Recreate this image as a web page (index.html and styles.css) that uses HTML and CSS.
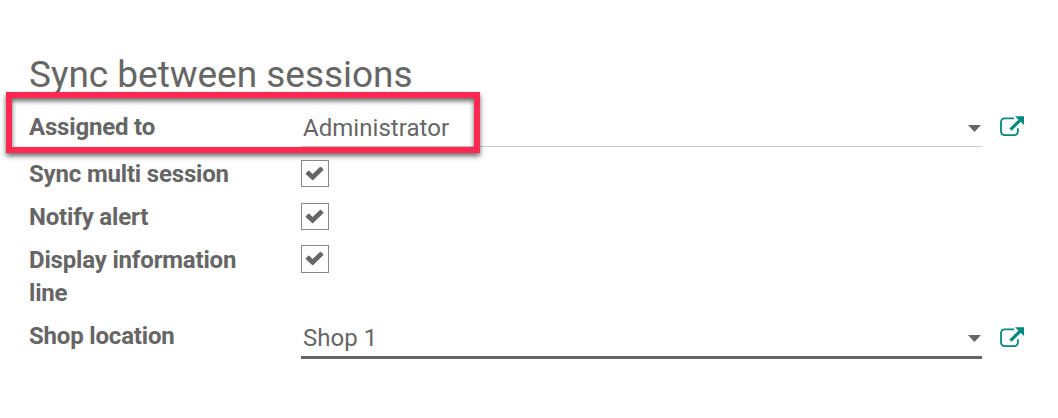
FILE: index.html
```html
<!DOCTYPE html>
<html lang="en">
<head>
<meta charset="utf-8">
<title>Sync between sessions</title>
<link rel="stylesheet" href="styles.css">
</head>
<body>
<svg class="symbols" aria-hidden="true">
  <symbol id="check" viewBox="0 0 20 16"><path d="M.9 8.2 3.2 5.8a.8.8 0 0 1 1.1 0L7.6 9 14.9 1.9a.8.8 0 0 1 1.1 0l2.2 2.2a.8.8 0 0 1 0 1.1L8.2 14.9a.8.8 0 0 1-1.1 0L.9 9.3a.8.8 0 0 1 0-1.1z" fill="currentColor"/></symbol>
  <symbol id="external" viewBox="0 0 24 21"><path d="M14 2.4H4.6A3.6 3.6 0 0 0 1 6v9.6a3.6 3.6 0 0 0 3.6 3.6h9.7a3.6 3.6 0 0 0 3.6-3.6v-3.4" fill="none" stroke="currentColor" stroke-width="1.8"/><path d="M10.5 13.7 20 4.4" fill="none" stroke="currentColor" stroke-width="3.2"/><path d="M15 .3h9v8.6z" fill="currentColor"/></symbol>
</svg>
<main class="settings">
  <h2 class="title">Sync between sessions</h2>
  <div class="row row-assigned">
    <label class="label">Assigned to</label>
    <div class="select"><span class="value">Administrator</span><i class="caret"></i></div>
    <svg class="external"><use href="#external"/></svg>
    <div class="highlight"></div>
  </div>
  <div class="row row-check">
    <label class="label">Sync multi session</label>
    <span class="checkbox"><svg class="check"><use href="#check"/></svg></span>
  </div>
  <div class="row row-check">
    <label class="label">Notify alert</label>
    <span class="checkbox"><svg class="check"><use href="#check"/></svg></span>
  </div>
  <div class="row row-check row-tall">
    <label class="label">Display information line</label>
    <span class="checkbox checkbox-tall"><svg class="check"><use href="#check"/></svg></span>
  </div>
  <div class="row">
    <label class="label">Shop location</label>
    <div class="select select-focus"><span class="value">Shop 1</span><i class="caret"></i></div>
    <svg class="external"><use href="#external"/></svg>
  </div>
</main>
</body>
</html>
```
FILE: styles.css
```css
* { box-sizing: border-box; }
body { margin: 0; background: #fff; color: #666; font: 24px/33px Roboto, sans-serif; }
.symbols { display: none; }
.settings { padding: 53px 0 0 29px; height: 418px; overflow: hidden; }
.title { margin: 0; height: 58px; font-size: 37px; line-height: 44px; font-weight: 400; letter-spacing: -0.03px; white-space: nowrap; }
.row { display: grid; grid-template-columns: 272px 681px 24px; align-items: start; position: relative; }
.row-assigned { height: 47px; }
.row-check { height: 43px; }
.row-tall { height: 76px; }
.label { font-weight: 700; letter-spacing: -0.18px; padding-right: 32px; }
.select { display: flex; justify-content: space-between; height: 36px; padding: 1px 1px 0 2px; border-bottom: 1px solid #ccc; }
.select-focus { height: 39px; padding-top: 2px; border-bottom: 3px solid #666; }
.value { letter-spacing: 0.04px; }
.caret { width: 13px; height: 7px; margin-top: 13px; background: #666; clip-path: polygon(0 0, 100% 0, 50% 100%); }
.external { width: 24px; height: 21px; margin: 5px 0 0 18px; color: #00897f; }
.row:last-child .external { margin-top: 7px; }
.checkbox { width: 28px; height: 27px; margin-top: 2px; border: 1px solid #888; display: flex; }
.checkbox-tall { height: 28px; margin-top: 1px; }
.check { width: 20px; height: 16px; margin: 4px 0 0 3px; color: #666; }
.highlight { position: absolute; left: -23px; top: -19px; width: 474px; height: 61px; border: 6px solid #ff2851; box-shadow: 0 3px 5px rgba(0,0,0,.6), inset 0 3px 5px rgba(0,0,0,.6); }
```
